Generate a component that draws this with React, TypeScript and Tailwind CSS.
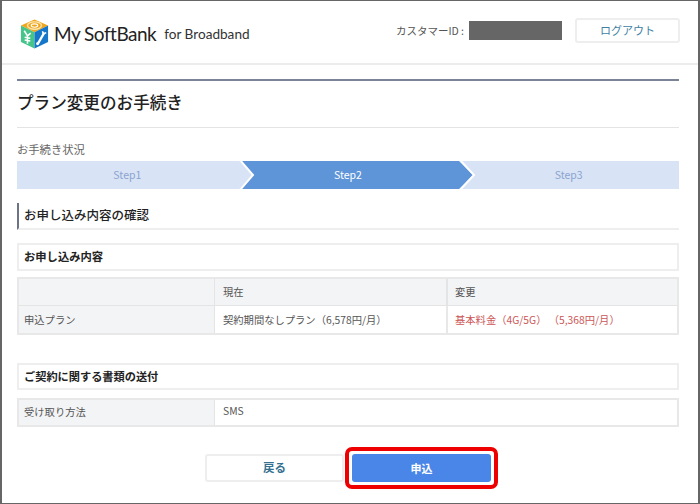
const jp = { fontFamily: '"Noto Sans CJK JP", "Noto Sans", sans-serif' };
const logoFont = { fontFamily: 'Lato, "Noto Sans", sans-serif' };

function Logo() {
  return (
    <svg width="29" height="32" viewBox="0 0 31 33" className="shrink-0 mt-[6px]">
      <path d="M15.5 1 L30 7.5 L15.5 14.5 L1 7.5 Z" fill="#f0a51e" />
      <path d="M1 7.5 L15.5 14.5 V32 L1 25 Z" fill="#45c58a" />
      <path d="M30 7.5 L15.5 14.5 V32 L30 25 Z" fill="#1577c9" />
      <ellipse cx="15.5" cy="7.5" rx="7.5" ry="4" fill="none" stroke="#fbe5a8" strokeWidth="1.5" />
      <ellipse cx="15.5" cy="7.5" rx="3.5" ry="1.8" fill="none" stroke="#fff" strokeWidth="1.2" />
      <path d="M4.5 13 L8 18.5 L11.5 15.5 M8 18.5 V27 M5 20 L11 21 M5 23 L11 24" fill="none" stroke="#fff" strokeWidth="1.7" />
      <path d="M19 27 L26 15" fill="none" stroke="#fff" strokeWidth="2.4" />
      <path d="M24 13.5 L25 16.5 L28 15" fill="none" stroke="#fff" strokeWidth="1.6" />
      <circle cx="18.8" cy="27" r="1.6" fill="#fff" />
    </svg>
  );
}

function StepBar() {
  return (
    <svg width="662" height="28" viewBox="0 0 662 28" className="absolute inset-0">
      <rect x="0" y="0" width="662" height="28" fill="#d8e3f5" />
      <polygon points="223,0 442,0 456,14 442,28 223,28 236,14" fill="#5e94d8" />
      <polyline points="223,-1 236,14 223,29" fill="none" stroke="#fff" strokeWidth="2" />
      <polyline points="443,-1 457,14 443,29" fill="none" stroke="#fff" strokeWidth="2" />
    </svg>
  );
}

export default function App() {
  return (
    <div style={jp} className="w-[700px] h-[504px] overflow-hidden bg-white border-x-2 border-t border-b border-[#666666] flex flex-col text-[#555555]">
      <header className="h-[64px] shrink-0 flex items-center border-b-2 border-[#ececec] pl-[18px] pr-[18px] pb-[3px]">
        <Logo />
        <span className="ml-[5px] mt-[6px] text-[19px] tracking-[-0.5px] text-[#222222] leading-none" style={logoFont}>My SoftBank</span>
        <span className="ml-[8px] mt-[9px] text-[13.6px] text-[#333333] leading-none" style={logoFont}>for Broadband</span>
        <span className="ml-auto text-[10.5px] text-[#555555]">カスタマーID :</span>
        <span className="ml-[5px] w-[93px] h-[19px] bg-[#666666]" />
        <button className="ml-[13px] w-[105px] h-[25px] rounded-[3px] border-2 border-[#eeeeee] text-[11px] text-[#3f7fa3] bg-white">ログアウト</button>
      </header>
      <main className="flex-1 ml-[15px] mr-[19px] mt-[14px] min-h-0">
        <div className="border-t-2 border-[#7b8496]" />
        <h1 className="h-[47px] flex items-center border-b border-[#e4e4e4] pb-[3px] text-[16.6px] font-medium text-[#222222] leading-none">プラン変更のお手続き</h1>
        <p className="mt-[14px] h-[14px] text-[11.3px] leading-[14px] text-[#666666]">お手続き状況</p>
        <div className="relative mt-[5px] h-[28px]">
          <StepBar />
          <div className="relative grid grid-cols-3 h-[28px] items-center text-center text-[10.5px] text-[#8ba4d0]">
            <span>Step1</span>
            <span className="text-white">Step2</span>
            <span>Step3</span>
          </div>
        </div>
        <h2 className="mt-[14px] h-[27px] flex items-center border-l-2 border-b-2 border-l-[#6b7385] border-b-[#eeeeee] pl-[5px] text-[12.5px] font-medium text-[#222222]">お申し込み内容の確認</h2>
        <h3 className="mt-[13px] h-[28px] flex items-center border-2 border-[#eeeeee] pl-[5px] pb-[2px] text-[11.3px] font-bold text-[#222222]">お申し込み内容</h3>
        <div className="mt-[6px] border-2 border-[#e8e8e8] text-[10.3px] grid grid-cols-[196px_233px_1fr]">
          <div className="h-[27px] bg-[#f3f4f6] border-r border-b border-[#e4e4e4]" />
          <div className="h-[27px] bg-[#f3f4f6] border-r-2 border-b border-[#e4e4e4] flex items-center pl-[8px]">現在</div>
          <div className="h-[27px] bg-[#f3f4f6] border-b border-[#e4e4e4] flex items-center pl-[7px]">変更</div>
          <div className="h-[27px] bg-[#f3f4f6] border-r border-[#e4e4e4] flex items-center pl-[5px]">申込プラン</div>
          <div className="h-[27px] border-r-2 border-[#e8e8e8] flex items-center pl-[8px]">契約期間なしプラン（6,578円/月）</div>
          <div className="h-[27px] flex items-center pl-[7px] text-[#cc5555] whitespace-pre">基本料金（4G/5G） （5,368円/月）</div>
        </div>
        <h3 className="mt-[28px] h-[27px] flex items-center border-2 border-[#eeeeee] pl-[5px] text-[11.2px] font-bold text-[#222222]">ご契約に関する書類の送付</h3>
        <div className="mt-[8px] border-2 border-[#e8e8e8] text-[10.3px] grid grid-cols-[196px_1fr]">
          <div className="h-[25px] bg-[#f3f4f6] border-r border-[#e4e4e4] flex items-center pl-[5px] pb-[2px]">受け取り方法</div>
          <div className="h-[25px] flex items-center pl-[8px] pb-[3px]">SMS</div>
        </div>
        <div className="mt-[20px] ml-[188px] flex items-center">
          <button className="w-[139px] h-[28px] rounded-[3px] border-2 border-[#eeeeee] bg-white text-[11.5px] font-bold text-[#34708f]">戻る</button>
          <div className="ml-[1px] p-[3px] border-4 border-[#ee0000] rounded-[7px]">
            <button className="block w-[139px] h-[28px] rounded-[3px] bg-[#4a86e8] text-[11px] font-bold text-white">申込</button>
          </div>
        </div>
      </main>
    </div>
  );
}
